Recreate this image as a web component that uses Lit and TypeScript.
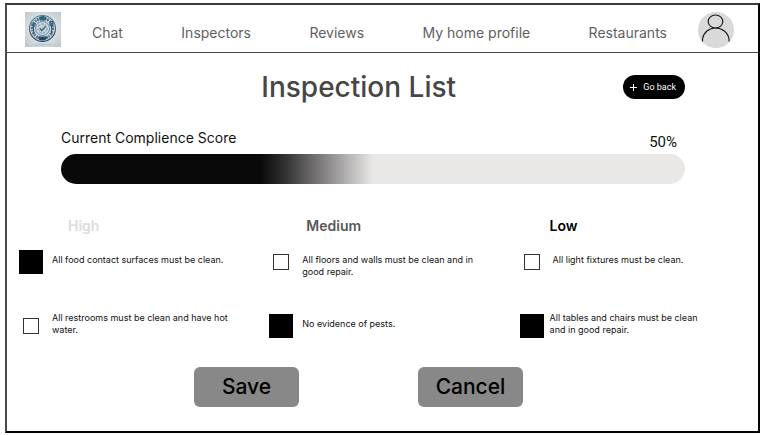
import { LitElement, html, css, svg } from "lit";
import { customElement, state } from "lit/decorators.js";
import { classMap } from "lit/directives/class-map.js";

interface Item {
  text: string;
  done: boolean;
}

interface Group {
  level: string;
  name: string;
  items: Item[];
}

const NAV = ["Chat", "Inspectors", "Reviews", "My home profile", "Restaurants"];

@customElement("inspection-logo")
class InspectionLogo extends LitElement {
  static styles = css`
    :host {
      display: block;
      width: 36px;
      height: 35px;
    }
    svg {
      display: block;
      width: 100%;
      height: 100%;
    }
  `;

  render() {
    const ticks = Array.from({ length: 12 }, (_, i) => i * 30);
    return html`
      <svg viewBox="0 0 36 35" role="img" aria-label="Inspection service logo">
        <defs>
          <radialGradient id="bg" cx="50%" cy="48%" r="70%">
            <stop offset="0.45" stop-color="#dfe4e7" />
            <stop offset="1" stop-color="#bcc5ca" />
          </radialGradient>
          <linearGradient id="ink" x1="0" y1="0" x2="0" y2="1">
            <stop offset="0" stop-color="#4b8496" />
            <stop offset="0.5" stop-color="#4d6a80" />
            <stop offset="1" stop-color="#2c4264" />
          </linearGradient>
        </defs>
        <rect width="36" height="35" fill="url(#bg)" />
        <ellipse cx="17.500" cy="32.500" rx="9" ry="1" fill="#a9cddb" />
        <circle cx="17.500" cy="16.500" r="13" fill="#cfdae0" stroke="url(#ink)" stroke-width="1.200" />
        <circle cx="17.500" cy="16.500" r="10" fill="none" stroke="#5d7b90" stroke-width="3" stroke-dasharray="1.500 1.100" />
        <circle cx="17.500" cy="16.500" r="7" fill="#d5e0e6" stroke="#54748a" stroke-width="0.900" />
        <circle cx="17.500" cy="16.500" r="4.700" fill="#c3d0d9" stroke="#6c8a9c" stroke-width="0.900" stroke-dasharray="3 1" />
        ${ticks.map(
          (a) => svg`<path d="M17.500 5v2.500" stroke="#41627a" stroke-width="0.900" transform="rotate(${a} 17.500 16.500)" />`
        )}
        <path d="M14 6.200c0-2 1.500-2 2-1.600 .6-1.300 2.600-1.300 3.200 0 1.300-.4 2.300.6 1.800 1.800l-1 2h-5z" fill="#2c6478" />
        <path d="M13.500 24.500h8v2.500l-2 1.500h-4l-2-1.500z" fill="#28486a" />
        <path d="M8.500 11v10M7 11v3h3v-3M26.500 11v10M25 9.500h3v4h-3z" fill="none" stroke="#315974" stroke-width="1" />
        <path d="M14.800 16.500l2 2 3.700-4" fill="none" stroke="#35607c" stroke-width="1.300" />
      </svg>
    `;
  }
}

@customElement("app-root")
class AppRoot extends LitElement {
  static styles = css`
    :host {
      display: block;
      padding: 3px 4px 3px 5px;
      background: #fff;
      color: #111;
      font-family: Inter, "Liberation Sans", sans-serif;
    }
    * {
      box-sizing: border-box;
    }
    h1,
    h2,
    ul {
      margin: 0;
      padding: 0;
      list-style: none;
    }
    .frame {
      border: 2px solid #1c1c1e;
      border-top-color: #3a3a3c;
      border-left-color: #4a4a4c;
      border-right-color: #000;
      border-bottom-color: #000;
      background: #fff;
    }
    header {
      display: flex;
      align-items: center;
      gap: 31px;
      height: 48px;
      padding: 2px 24px 0 18px;
      border-bottom: 1px solid #48484a;
    }
    nav {
      flex: 1;
      display: flex;
      justify-content: space-between;
      padding-top: 6px;
    }
    nav a {
      color: #5f5f5f;
      font-size: 14px;
      line-height: 18px;
      text-decoration: none;
      white-space: nowrap;
    }
    .avatar {
      width: 36px;
      height: 36px;
      padding: 0;
      border: 0;
      background: none;
    }
    .avatar svg {
      display: block;
    }
    .summary {
      padding: 20px 73px 0 54px;
    }
    .title-row {
      display: grid;
      grid-template-columns: 7fr auto 8fr;
      align-items: center;
    }
    h1 {
      grid-column: 2;
      color: #464646;
      font-size: 28px;
      line-height: 28px;
      font-weight: 500;
    }
    .back {
      justify-self: end;
      display: flex;
      align-items: center;
      gap: 6px;
      height: 24px;
      padding: 0 9px 0 7px;
      border: 0;
      border-radius: 12px;
      background: #000;
      color: #fff;
      font: 400 9px Roboto, sans-serif;
      white-space: nowrap;
    }
    .back svg {
      display: block;
    }
    .score {
      display: flex;
      justify-content: space-between;
      padding: 27px 8px 0 0;
      font-size: 14px;
      line-height: 20px;
    }
    .value {
      padding-top: 4px;
      font-family: Roboto, sans-serif;
      font-size: 15px;
    }
    .bar {
      height: 30px;
      margin-top: 2px;
      border-radius: 15px;
      background: linear-gradient(90deg, #090909 32%, #333 36%, #777375 41%, #b5b3b3 46%, #e9e8e6 50%);
    }
    .groups {
      display: grid;
      grid-template-columns: 21fr 21fr 20fr;
      padding: 33px 0 0 12px;
    }
    h2 {
      font-size: 14px;
      line-height: 18px;
      font-weight: 600;
    }
    .high h2 {
      padding-left: 49px;
      color: #dcdcdc;
    }
    .medium h2 {
      padding-left: 37px;
      color: #585858;
    }
    .low h2 {
      padding-left: 30px;
      color: #000;
    }
    ul {
      display: grid;
      gap: 40px;
      padding-top: 15px;
    }
    li {
      display: flex;
      height: 24px;
    }
    .box {
      flex: none;
      width: 24px;
      height: 24px;
      display: grid;
      place-items: center;
    }
    input {
      appearance: none;
      width: 16px;
      height: 16px;
      margin: 0;
      border: 1px solid #333;
      background: #fff;
    }
    input:checked {
      width: 24px;
      height: 24px;
      border-color: #000;
      background: #000;
    }
    label {
      display: flex;
      align-items: center;
      height: 20px;
      max-width: 190px;
      margin-left: 9px;
      font-size: 9px;
      line-height: 12px;
    }
    .low .done label {
      margin-left: 6px;
      max-width: 160px;
    }
    li:first-child label {
      align-items: flex-start;
      padding-top: 4px;
    }
    .actions {
      display: flex;
      justify-content: center;
      gap: 119px;
      padding: 29px 102px 24px 54px;
    }
    .actions button {
      width: 105px;
      height: 40px;
      padding: 0 0 2px;
      border: 0;
      border-radius: 6px;
      background: #888;
      color: #000;
      font: 500 21px Inter, sans-serif;
    }
  `;

  @state() private groups: Group[] = [
    {
      level: "high",
      name: "High",
      items: [
        { text: "All food contact surfaces must be clean.", done: true },
        { text: "All restrooms must be clean and have hot water.", done: false },
      ],
    },
    {
      level: "medium",
      name: "Medium",
      items: [
        { text: "All floors and walls must be clean and in good repair.", done: false },
        { text: "No evidence of pests.", done: true },
      ],
    },
    {
      level: "low",
      name: "Low",
      items: [
        { text: "All light fixtures must be clean.", done: false },
        { text: "All tables and chairs must be clean and in good repair.", done: true },
      ],
    },
  ];

  private toggle(item: Item) {
    item.done = !item.done;
    this.requestUpdate();
  }

  private renderGroup(group: Group) {
    return html`
      <section class=${group.level}>
        <h2>${group.name}</h2>
        <ul>
          ${group.items.map((item, i) => {
            const id = `${group.level}-${i}`;
            return html`
              <li class=${classMap({ done: item.done })}>
                <span class="box">
                  <input id=${id} type="checkbox" .checked=${item.done} @change=${() => this.toggle(item)} />
                </span>
                <label for=${id}><span>${item.text}</span></label>
              </li>
            `;
          })}
        </ul>
      </section>
    `;
  }

  render() {
    return html`
      <div class="frame">
        <header>
          <inspection-logo></inspection-logo>
          <nav>${NAV.map((name) => html`<a href="#">${name}</a>`)}</nav>
          <button class="avatar" aria-label="Account">
            <svg width="36" height="36" viewBox="0 0 36 36" fill="none" stroke="#1e1e1e" stroke-width="1.200">
              <circle cx="18" cy="18" r="18" fill="#d9d9d9" stroke="none" />
              <ellipse cx="17.500" cy="9.500" rx="7.300" ry="6.500" />
              <path d="M4.500 29.500V27C5.500 20.500 11 16 17.500 16S30 20.500 31 27v2.500" />
            </svg>
          </button>
        </header>
        <main>
          <div class="summary">
            <div class="title-row">
              <h1>Inspection List</h1>
              <button class="back">
                <svg width="7" height="7" viewBox="0 0 7 7" stroke="#fff" aria-hidden="true">
                  <path d="M3.500 0v7M0 3.500h7" />
                </svg>
                Go back
              </button>
            </div>
            <div class="score">
              <span id="score">Current Complience Score</span>
              <span class="value">50%</span>
            </div>
            <div
              class="bar"
              role="progressbar"
              aria-labelledby="score"
              aria-valuenow="50"
              aria-valuemin="0"
              aria-valuemax="100"
            ></div>
          </div>
          <div class="groups">${this.groups.map((g) => this.renderGroup(g))}</div>
          <div class="actions">
            <button>Save</button>
            <button>Cancel</button>
          </div>
        </main>
      </div>
    `;
  }
}
